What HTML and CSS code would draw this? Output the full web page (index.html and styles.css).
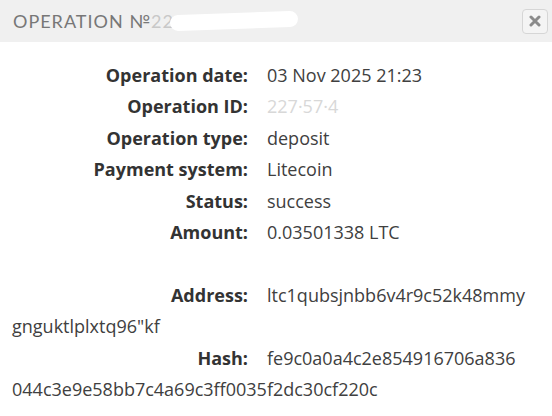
FILE: index.html
```html
<!DOCTYPE html>
<html>
<head>
<meta charset="utf-8">
<link rel="stylesheet" href="styles.css">
</head>
<body>
<div class="modal">
  <div class="modal-head">
    <div class="title">OPERATION №<span class="faint">22</span><span class="blot"></span></div>
    <button class="close" aria-label="close">
      <svg width="12" height="12" viewBox="0 0 12 12"><path d="M2 2 L10 10 M10 2 L2 10" stroke="#8a8a8a" stroke-width="3" stroke-linecap="round"/></svg>
    </button>
  </div>
  <div class="modal-body">
    <div class="row"><span class="label">Operation date:</span>03 Nov 2025 21:23</div>
    <div class="row"><span class="label">Operation ID:</span><span class="faint">227·57·4</span></div>
    <div class="row"><span class="label">Operation type:</span>deposit</div>
    <div class="row"><span class="label">Payment system:</span>Litecoin</div>
    <div class="row"><span class="label">Status:</span>success</div>
    <div class="row"><span class="label">Amount:</span>0.03501338 LTC</div>
    <div class="row spacer"></div>
    <div class="row"><span class="label">Address:</span>ltc1qubsjnbb6v4r9c52k48mmy<br>gnguktlplxtq96"kf</div>
    <div class="row"><span class="label">Hash:</span>fe9c0a0a4c2e854916706a836<br>044c3e9e58bb7c4a69c3ff0035f2dc30cf220c</div>
  </div>
</div>
</body>
</html>
```
FILE: styles.css
```css
html, body {
  margin: 0;
  padding: 0;
  background: #fff;
}
body {
  font-family: "Open Sans", "Liberation Sans", sans-serif;
  width: 552px;
  height: 416px;
  overflow: hidden;
}
.modal {
  width: 552px;
}
.modal-head {
  background: #f0f0f0;
  height: 42px;
  display: flex;
  align-items: center;
  justify-content: space-between;
  padding: 0 4px 0 13px;
  box-sizing: border-box;
}
.title {
  font-family: "Lato", "Open Sans", sans-serif;
  font-size: 18px;
  letter-spacing: 1px;
  color: #777;
  display: flex;
  align-items: center;
}
.title .faint {
  color: #c8c8c8;
}
.blot {
  display: inline-block;
  width: 128px;
  height: 16px;
  background: #fff;
  border-radius: 8px;
  margin-left: -4px;
  transform: rotate(-2deg);
}
.close {
  width: 26px;
  height: 25px;
  border: 1px solid #d6d6d6;
  border-radius: 4px;
  background: #f4f4f4;
  display: flex;
  align-items: center;
  justify-content: center;
  padding: 0;
}
.modal-body {
  padding: 18px 12px 0 12px;
  font-size: 18px;
  color: #404040;
}
.row {
  line-height: 31.4px;
  white-space: nowrap;
}
.spacer {
  height: 31.4px;
}
.label {
  display: inline-block;
  width: 236px;
  margin-right: 19px;
  text-align: right;
  font-weight: 700;
  color: #333;
}
.faint {
  color: #d8d8d8;
}
```
